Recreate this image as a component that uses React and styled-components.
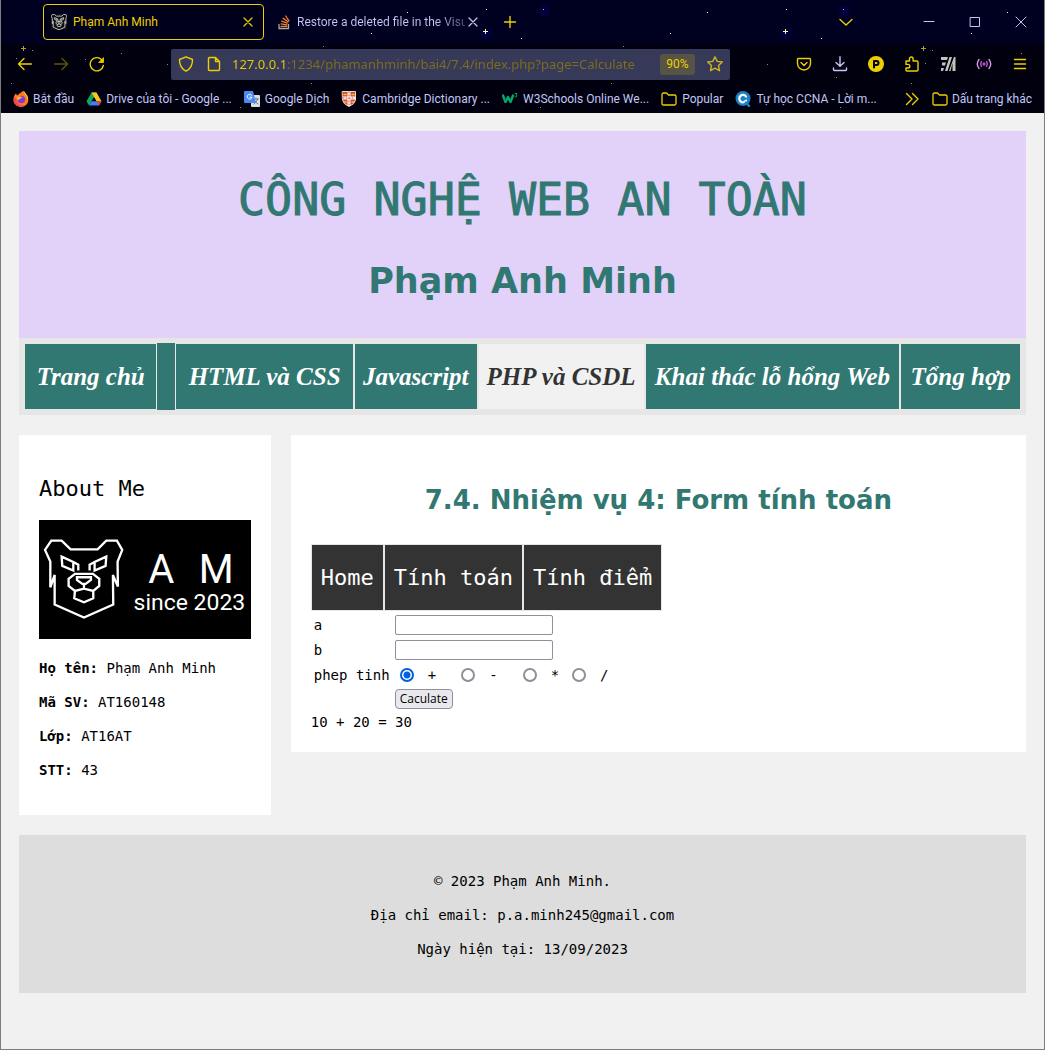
import React, { useState } from "react";
import styled, { createGlobalStyle } from "styled-components";

const MONO = '"DejaVu Sans Mono", "Liberation Mono", monospace';
const DISPLAY = '"DejaVu Sans", sans-serif';
const SCRIPT = '"Liberation Serif", serif';
const UI = 'Roboto, "Open Sans", sans-serif';
const TEAL = "#317873";
const GOLD = "#ecd000";
const LILAC = "#c3c7f4";

const GlobalStyle = createGlobalStyle`
  *, *::before, *::after { box-sizing: border-box; }
  body { margin: 0; background: #f1f1f1; }
  h1, h2, p { margin: 0; padding: 0; }
  button { font: inherit; color: inherit; }
  a { color: inherit; text-decoration: none; }
`;

/* ---------- browser window ---------- */

const Window = styled.div`
  min-height: 100vh;
  border: 1px solid #7d7d7d;
  border-top: 0;
  display: flex;
  flex-direction: column;
`;

const Chrome = styled.header`
  position: relative;
  background: #00000f;
  color: ${LILAC};
  font: 12px/16px ${UI};
`;

const Sky = styled.svg`
  position: absolute;
  inset: 0;
  width: 100%;
  height: 100%;
  pointer-events: none;
`;

const TabStrip = styled.div`
  display: flex;
  align-items: center;
  height: 44px;
  padding-left: 42px;
  background: #000021;
`;

const Tab = styled.div`
  display: flex;
  align-items: center;
  gap: ${(p) => (p.$active ? 6 : 4)}px;
  height: 36px;
  width: ${(p) => (p.$active ? 221 : 220)}px;
  padding: 0 7px;
  border: 1px solid ${(p) => (p.$active ? GOLD : "transparent")};
  border-radius: 4px;
  background: ${(p) => (p.$active ? "#00001a" : "transparent")};
  color: ${(p) => (p.$active ? GOLD : LILAC)};
`;

const TabTitle = styled.span`
  flex: 1;
  min-width: 0;
  white-space: nowrap;
  ${(p) => p.$fade && `
    color: transparent;
    background: linear-gradient(to left, #4a4c6c, ${LILAC} 30px);
    background-clip: text;
    -webkit-background-clip: text;
    padding-right: 4px;
    margin-right: -4px;
  `}
`;

const IconButton = styled.button`
  display: flex;
  align-items: center;
  justify-content: center;
  flex: none;
  width: ${(p) => p.$w || 36}px;
  height: 32px;
  padding: 0;
  border: 0;
  background: none;
  color: ${(p) => p.$color || GOLD};
  opacity: ${(p) => (p.$dim ? 0.4 : 1)};
`;

const Spacer = styled.div`
  flex: ${(p) => (p.$w ? "none" : 1)};
  width: ${(p) => (p.$w ? `${p.$w}px` : "auto")};
`;

const Toolbar = styled.div`
  display: flex;
  align-items: center;
  height: 40px;
  padding: 0 6px;
`;

const AddressBar = styled.div`
  flex: 1;
  min-width: 0;
  display: flex;
  align-items: center;
  height: 31px;
  margin: 0 56px;
  padding: 0 1px;
  border-radius: 2px;
  background: #363958;
`;

const AddressInput = styled.input`
  flex: 1;
  min-width: 0;
  padding: 0;
  margin-left: 4px;
  border: 0;
  outline: 0;
  font: 13px/20px "Noto Sans", sans-serif;
  color: transparent;
  caret-color: ${GOLD};
  background: linear-gradient(to right, ${GOLD} 56px, #7c6e1c 56px);
  background-clip: text;
  -webkit-background-clip: text;
`;

const ZoomBadge = styled.button`
  width: 35px;
  height: 21px;
  margin-right: 6px;
  padding: 0;
  border: 0;
  border-radius: 3px;
  background: #575443;
  color: ${GOLD};
`;

const BookmarkBar = styled.nav`
  display: flex;
  align-items: center;
  height: 29px;
  padding: 0 12px;
  gap: 12px;
`;

const Bookmark = styled.a`
  display: flex;
  align-items: center;
  gap: ${(p) => (p.$wide ? 5 : 4)}px;
  white-space: nowrap;
`;

/* ---------- page ---------- */

const Page = styled.main`
  flex: 1;
  padding: 18px;
  background: #f1f1f1;
  color: #000;
  font: 14px/20px ${MONO};
`;

const Banner = styled.header`
  padding: 42px 18px 35px;
  background: #e2d2f9;
  color: ${TEAL};
  text-align: center;
`;

const SiteTitle = styled.h1`
  font: 45px/54px ${MONO};
  -webkit-text-stroke: 1px ${TEAL};
`;

const SiteOwner = styled.p`
  margin-top: 32px;
  font: bold 35px/44px ${DISPLAY};
`;

const SiteNav = styled.nav`
  display: flex;
  padding: 5px;
  background: #e6e6e6;
`;

const NavLink = styled.a`
  flex: ${(p) => p.$share} 0 0;
  min-width: 0;
  display: flex;
  align-items: center;
  justify-content: center;
  height: 67px;
  border: 1px solid #e6e6e6;
  border-width: ${(p) => (p.$slim ? "0" : "1px")};
  background: ${(p) => (p.$current ? "#f1f1f1" : TEAL)};
  color: ${(p) => (p.$current ? "#333" : "#fff")};
  font: italic bold 25px/32px ${SCRIPT};
  white-space: nowrap;
`;

const Columns = styled.div`
  display: grid;
  grid-template-columns: 25% minmax(0, 1fr);
  align-items: start;
  gap: 20px;
  margin: 20px 0;
`;

const Card = styled.section`
  padding: 41px 20px ${(p) => p.$bottom}px;
  background: #fff;
`;

const AboutTitle = styled.h2`
  font: 22px/26px ${MONO};
`;

const Emblem = styled.svg`
  display: block;
  width: 100%;
  margin: 18px 0 19px;
  background: #000;
`;

const Lines = styled.div`
  display: grid;
  gap: 14px;
`;

const TaskTitle = styled.h2`
  padding: 8px 0 28px;
  color: ${TEAL};
  text-align: center;
  font: bold 26px/32px ${DISPLAY};
`;

const Menu = styled.nav`
  display: flex;
`;

const MenuLink = styled.a`
  padding: 0 9px;
  border: 1px solid #e6e6e6;
  background: #333;
  color: #fff;
  font: 22px/65px ${MONO};
`;

const FormTable = styled.table`
  border-spacing: 2px;
  td, th { padding: 1px; height: 23px; text-align: left; font-weight: normal; }
  th { width: 79px; }
  tr:last-child > * { height: 22px; }
`;

const NumberField = styled.input`
  display: block;
  width: 158px;
  height: 20px;
  padding: 0 4px;
  border: 1px solid #8f8f9d;
  border-radius: 2px;
  background: #fff;
`;

const Choices = styled.div`
  display: flex;
`;

const Choice = styled.label`
  display: flex;
  align-items: center;
  gap: 14px;
  padding-left: 5px;
  margin-right: ${(p) => (p.$tight ? 8 : 20)}px;
`;

const Radio = styled.input`
  appearance: none;
  width: 14px;
  height: 14px;
  margin: 0;
  border: 2px solid #8f8f9d;
  border-radius: 50%;
  background: #fff;
  &:checked {
    border-color: #0060df;
    background: radial-gradient(circle, #0060df 3px, #fff 4px);
  }
`;

const Submit = styled.button`
  display: block;
  height: 20px;
  padding: 0 4px;
  border: 1px solid #8f8f9d;
  border-radius: 4px;
  background: #e9e9ed;
  color: #000;
  font: 12px/16px "Open Sans", sans-serif;
`;

const Footer = styled.footer`
  display: grid;
  gap: 14px;
  padding: 36px 20px 34px;
  background: #ddd;
  text-align: center;
`;

/* ---------- drawings ---------- */

const Drawing = styled.svg`
  flex: none;
  background: ${(p) => p.$bg || "none"};
`;

const Glyph = ({ children, size = 16, w = 1.4 }) => (
  <Drawing width={size} height={size} viewBox="0 0 16 16" fill="none" stroke="currentColor" strokeWidth={w} strokeLinecap="round" strokeLinejoin="round" aria-hidden="true">
    {children}
  </Drawing>
);

const BearLines = () => (
  <>
    <path d="M18 90 37 62H68L95 88H176L202 62H234L250 90 236 125 237 200 222 165 223 254 135 293 47 254V165L34 202V125Z" />
    <path d="M68 110 103 126V152L70 138ZM103 126 118 134V152M202 110 167 126V152L200 138ZM167 126 152 134V152" />
    <path d="M108 162H162L181 177V198L163 213 135 206 108 213 89 198V177ZM114 172H156V180L140 192H130L114 180ZM135 192V206M108 213 106 235 135 247 163 235V213" />
  </>
);

const BearIcon = () => (
  <Drawing $bg="#111" width="16" height="16" viewBox="14 56 240 240" fill="none" stroke="#c8c8c8" strokeWidth="14" aria-hidden="true">
    <BearLines />
  </Drawing>
);

const CloseGlyph = () => (
  <Glyph w={1.2}><path d="M4 4 12 12M12 4 4 12" /></Glyph>
);
const FolderGlyph = () => (
  <Glyph w={1.3}><path d="M1 3.5Q1 2 2.5 2H5.5L7.5 4H13.5Q15 4 15 5.5V12.5Q15 14 13.5 14H2.5Q1 14 1 12.5Z" stroke={GOLD} /></Glyph>
);

const StackGlyph = () => (
  <Glyph w={1.3}>
    <path d="M2 10.5V14.5H11.5V10.5" stroke="#a9abb0" />
    <path d="M4 12.3H9.8M4.1 9.8 9.9 10.8M4.7 7.2 10.2 9.2M6.2 4.4 11 7.8M8.7 2 12 6.8" stroke="#f48024" />
  </Glyph>
);

const FirefoxGlyph = () => (
  <Glyph w={0}>
    <path d="M8 1.5C9 0 11 0 11 0 11 2 14 4 15 7 16.5 12 12.5 16 8 16 3.5 16 0 12.5.5 8 .7 5 2 3.5 3 2.5L4 4.5Z" fill="#ff7a1a" />
    <path d="M11 0C10 3 15.5 5 14 10 17 4.5 12 3 11 0Z" fill="#ffd43a" />
    <path d="M.7 9C2 15 8 17.5 12.5 14.5 8 15 4 13 3.5 9L2 6Z" fill="#ff3d5a" />
    <circle cx="8.3" cy="8.5" r="3.8" fill="#7a3ae0" />
    <path d="M4.5 5.5 8 5.5 9.5 7Q6 7 6 9.5L4 8Z" fill="#ffb52e" />
  </Glyph>
);

const DriveGlyph = () => (
  <Glyph w={0}>
    <path d="M5.5 1.5H10.5L8 6 3 14.5.5 10.3Z" fill="#12a85a" />
    <path d="M5.5 1.5H10.5L15.5 10.3H10.5Z" fill="#fcc41f" />
    <path d="M5.6 10.3H15.5L13 14.5H3Z" fill="#3e82f1" />
    <path d="M10.5 10.3H15.5L13 14.5Z" fill="#e5432d" />
  </Glyph>
);

const TranslateGlyph = () => (
  <Glyph w={1}>
    <rect x="7" y="4" width="9" height="12" rx="1" fill="#dcdfe4" stroke="none" />
    <path d="M9.5 8H14.5M12 7V8M13.5 8Q13 11 10 13M10.5 10 14 13" stroke="#6b7f92" />
    <path d="M1 0H9L12 12H1Q0 12 0 11V1Q0 0 1 0Z" fill="#4a8af4" stroke="none" />
    <path d="M7.6 4.3A2.4 2.4 0 1 0 8 6.2H5.8" stroke="#fff" />
  </Glyph>
);

const CrestGlyph = () => (
  <Glyph w={1}>
    <path d="M1.5.5H14.5V9Q14 13 8 15.5 2 13 1.5 9Z" fill="#d8452f" stroke="#e9d9cf" />
    <path d="M8 1V15M2 7H14" stroke="#fff" strokeWidth="3" strokeLinecap="butt" />
    <path d="M8 1V14M2 7H14" stroke="#d8452f" strokeDasharray="1 2" />
    <path d="M3 3.5H5M11 3.5H13M3.5 11H5M11 11H12.5" stroke="#f4c542" strokeWidth="1.5" />
  </Glyph>
);

const SchoolsGlyph = () => (
  <Glyph w={2.4}>
    <path d="M1 4.5 3.5 11 6 6 8.5 11 11 4.5" stroke="#04aa6d" />
    <path d="M13 2.5H15L14 4Q15.5 4.5 14.8 5.6 14 6.3 13 5.6" stroke="#04aa6d" strokeWidth="0.9" />
  </Glyph>
);

const CcnaGlyph = () => (
  <Glyph w={0}>
    <circle cx="8" cy="7.5" r="7.5" fill="#1b82c8" />
    <path d="M11 5.5A3.7 3.7 0 1 0 11 9.7" fill="none" stroke="#fff" strokeWidth="2.2" />
    <path d="M11 11.5 14 15" stroke="#1b82c8" strokeWidth="2.5" />
  </Glyph>
);

const STARS = [
  [407, 12], [486, 9], [543, 9], [371, 33], [521, 38], [670, 33], [707, 12], [786, 9], [843, 9], [821, 38], [971, 33], [1007, 12],
];
const FAINT_STARS = [
  [32, 50], [16, 58], [121, 53], [85, 59], [167, 64], [11, 83], [240, 107], [311, 83], [323, 46], [623, 46], [611, 83],
  [540, 107], [767, 64], [836, 77], [840, 107], [932, 50], [925, 63], [911, 83], [1021, 53],
];

const StarField = () => (
  <Sky aria-hidden="true">
    {STARS.map(([x, y]) => <rect key={`${x}-${y}`} x={x - 1} y={y} width="1" height="1" fill="#ffff9c" />)}
    {FAINT_STARS.map(([x, y]) => <rect key={`${x}-${y}`} x={x - 1} y={y} width="1" height="1" fill="#8f8f5c" />)}
    {[[543, 11], [843, 11], [485, 33], [785, 33]].map(([x, y]) => (
      <circle key={x} cx={x} cy={y} r="6" fill="#0000a0" fillOpacity="0.2" />
    ))}
    {[[484, 31], [784, 31]].map(([x, y]) => (
      <path key={x} d={`M${x - 2} ${y}.5h5M${x}.5 ${y - 2}v5`} stroke="#ffff9c" />
    ))}
    {[[22, 48], [922, 48]].map(([x, y]) => (
      <path key={x} d={`M${x - 2} ${y}.5h5M${x}.5 ${y - 2}v5`} stroke="#a59c50" />
    ))}
  </Sky>
);

/* ---------- data ---------- */

const BOOKMARKS = [
  ["Bắt đầu", FirefoxGlyph],
  ["Drive của tôi - Google ...", DriveGlyph],
  ["Google Dịch", TranslateGlyph],
  ["Cambridge Dictionary ...", CrestGlyph],
  ["W3Schools Online We...", SchoolsGlyph],
  ["Popular", FolderGlyph],
  ["Tự học CCNA - Lời m...", CcnaGlyph],
];

const NAV = [
  { text: "Trang chủ", share: 133 },
  { text: "", share: 18, slim: true },
  { text: "HTML và CSS", share: 179 },
  { text: "Javascript", share: 123 },
  { text: "PHP và CSDL", share: 167, current: true },
  { text: "Khai thác lỗ hổng Web", share: 257 },
  { text: "Tổng hợp", share: 120 },
];

const PROFILE = [
  ["Họ tên:", "Phạm Anh Minh"],
  ["Mã SV:", "AT160148"],
  ["Lớp:", "AT16AT"],
  ["STT:", "43"],
];

const BrowserChrome = () => (
  <Chrome>
    <TabStrip>
      <Tab $active>
        <BearIcon />
        <TabTitle>Phạm Anh Minh</TabTitle>
        <CloseGlyph />
      </Tab>
      <Spacer $w={5} />
      <Tab>
        <StackGlyph />
        <TabTitle $fade>Restore a deleted file in the Visu</TabTitle>
        <CloseGlyph />
      </Tab>
      <IconButton $w={42} aria-label="New tab"><Glyph><path d="M8 2.5V13.5M2.5 8H13.5" /></Glyph></IconButton>
      <Spacer />
      <IconButton $w={32} aria-label="List all tabs"><Glyph><path d="M2 5.5 8 11 14 5.5" /></Glyph></IconButton>
      <Spacer $w={44} />
      <IconButton $w={46} $color={LILAC} aria-label="Minimize"><Glyph w={1}><path d="M3 7.5H13" /></Glyph></IconButton>
      <IconButton $w={46} $color={LILAC} aria-label="Maximize"><Glyph w={1}><path d="M3.5 3.5H12.5V12.5H3.5Z" /></Glyph></IconButton>
      <IconButton $w={46} $color={LILAC} aria-label="Close"><Glyph w={1}><path d="M3 3 13 13M13 3 3 13" /></Glyph></IconButton>
    </TabStrip>
    <Toolbar>
      <IconButton aria-label="Back"><Glyph><path d="M14.5 8H1.5M7 2.5 1.5 8 7 13.5" /></Glyph></IconButton>
      <IconButton $dim aria-label="Forward"><Glyph><path d="M1.5 8H14.5M9 2.5 14.5 8 9 13.5" /></Glyph></IconButton>
      <IconButton aria-label="Reload"><Glyph><path d="M14.3 9.5A6.6 6.6 0 1 1 12.7 3.8" /><path d="M14.5 2V6.5H10Z" fill="currentColor" strokeWidth="0.8" /></Glyph></IconButton>
      <AddressBar>
        <IconButton $w={28} aria-label="Tracking protection"><Glyph><path d="M8 .8 14.5 3.5Q14.8 11.5 8 15.2 1.2 11.5 1.5 3.5Z" /></Glyph></IconButton>
        <IconButton $w={28} aria-label="Site information"><Glyph><path d="M3.5 1.5H9.5L13.5 5.5V13.5Q13.5 14.5 12.5 14.5H3.5Q2.5 14.5 2.5 13.5V2.5Q2.5 1.5 3.5 1.5ZM9.5 1.5V5.5H13.5" /></Glyph></IconButton>
        <AddressInput aria-label="Address" defaultValue="127.0.0.1:1234/phamanhminh/bai4/7.4/index.php?page=Calculate" />
        <ZoomBadge>90%</ZoomBadge>
        <IconButton $w={28} $color="#c9b51a" aria-label="Bookmark this page"><Glyph><path d="M8 .8 10.2 5.4 15.3 6 11.5 9.5 12.5 14.7 8 12.2 3.5 14.7 4.5 9.5.7 6 5.8 5.4Z" /></Glyph></IconButton>
      </AddressBar>
      <IconButton aria-label="Pocket"><Glyph><path d="M2.5 2.5H13.5Q14.5 2.5 14.5 3.5V7.5A6.5 6.5 0 0 1 1.5 7.5V3.5Q1.5 2.5 2.5 2.5ZM5 6.5 8 9.5 11 6.5" /></Glyph></IconButton>
      <IconButton $color={LILAC} aria-label="Downloads"><Glyph><path d="M8 .8V10M4 6.5 8 10.3 12 6.5M1.5 12V13.5Q1.5 14.5 2.5 14.5H13.5Q14.5 14.5 14.5 13.5V12" /></Glyph></IconButton>
      <IconButton aria-label="Profile">
        <Glyph><circle cx="8" cy="8" r="7.3" fill="currentColor" /><path d="M6 11.5V5H8.5Q10.5 5 10.5 7T8.5 9H6" stroke="#00000f" strokeWidth="2" /></Glyph>
      </IconButton>
      <IconButton aria-label="Extensions"><Glyph><path d="M2 5H5.5V2.8A1.8 1.8 0 0 1 9.1 2.8V5H13Q14 5 14 6V14Q14 15 13 15H3Q2 15 2 14V12H4A1.8 1.8 0 0 0 4 8.4H2Z" /></Glyph></IconButton>
      <IconButton $color="#c4c4bd" aria-label="Reader extension">
        <Glyph w={0}><path d="M1 1H8L7 4H1ZM2 6.5H6L5 9.5H2ZM1 12H4L3 15H1ZM9.5 1H12L7.5 15H5ZM14 1H15.5V15H12.5V7L10.5 15H9Z" fill="currentColor" /></Glyph>
      </IconButton>
      <IconButton $color="#b548c4" aria-label="Broadcast extension">
        <Glyph><circle cx="8" cy="8" r="1" fill="currentColor" /><path d="M5.5 5.5Q3.8 8 5.5 10.5M10.5 5.5Q12.2 8 10.5 10.5" /><path d="M3 3.5Q-.5 8 3 12.5M13 3.5Q16.5 8 13 12.5" stroke="#cf9ad8" /></Glyph>
      </IconButton>
      <IconButton aria-label="Menu"><Glyph><path d="M2.5 3.5H13.5M2.5 8H13.5M2.5 12.5H13.5" /></Glyph></IconButton>
    </Toolbar>
    <BookmarkBar aria-label="Bookmarks">
      {BOOKMARKS.map(([text, Art], i) => (
        <Bookmark key={text} $wide={i > 1} href="#"><Art />{text}</Bookmark>
      ))}
      <Spacer />
      <IconButton $w={16} aria-label="More bookmarks"><Glyph><path d="M2.5 2.5 8 8 2.5 13.5M8.5 2.5 14 8 8.5 13.5" /></Glyph></IconButton>
      <Bookmark href="#"><FolderGlyph />Dấu trang khác</Bookmark>
    </BookmarkBar>
    <StarField />
  </Chrome>
);

export default function App() {
  const [op, setOp] = useState("+");
  return (
    <Window>
      <GlobalStyle />
      <BrowserChrome />
      <Page>
        <Banner>
          <SiteTitle>CÔNG NGHỆ WEB AN TOÀN</SiteTitle>
          <SiteOwner>Phạm Anh Minh</SiteOwner>
        </Banner>
        <SiteNav>
          {NAV.map((n) => (
            <NavLink key={n.text} href="#" $share={n.share} $slim={n.slim} $current={n.current} aria-label={n.text || "Menu"}>
              {n.text}
            </NavLink>
          ))}
        </SiteNav>
        <Columns>
          <Card $bottom={35}>
            <AboutTitle>About Me</AboutTitle>
            <Emblem viewBox="0 0 636 357" role="img" aria-label="A M since 2023">
              <g fill="none" stroke="#fff" strokeWidth="7"><BearLines /></g>
              <g fill="#fff" fontFamily="Roboto, sans-serif">
                <text x="328" y="190" fontSize="120">A</text>
                <text x="480" y="190" fontSize="120">M</text>
                <text x="284" y="270" fontSize="69">since 2023</text>
              </g>
            </Emblem>
            <Lines>
              {PROFILE.map(([k, v]) => <p key={k}><b>{k}</b> {v}</p>)}
            </Lines>
          </Card>
          <Card $bottom={20}>
            <TaskTitle>7.4. Nhiệm vụ 4: Form tính toán</TaskTitle>
            <Menu>
              <MenuLink href="#">Home</MenuLink>
              <MenuLink href="#">Tính toán</MenuLink>
              <MenuLink href="#">Tính điểm</MenuLink>
            </Menu>
            <form onSubmit={(e) => e.preventDefault()}>
              <FormTable>
                <tbody>
                  <tr><th><label htmlFor="a">a</label></th><td><NumberField id="a" type="text" /></td></tr>
                  <tr><th><label htmlFor="b">b</label></th><td><NumberField id="b" type="text" /></td></tr>
                  <tr>
                    <th>phep tinh</th>
                    <td>
                      <Choices>
                        {["+", "-", "*", "/"].map((s) => (
                          <Choice key={s} $tight={s === "*"}>
                            <Radio type="radio" name="op" value={s} checked={op === s} onChange={() => setOp(s)} />
                            {s}
                          </Choice>
                        ))}
                      </Choices>
                    </td>
                  </tr>
                  <tr><th /><td><Submit type="submit">Caculate</Submit></td></tr>
                </tbody>
              </FormTable>
            </form>
            <p>10 + 20 = 30</p>
          </Card>
        </Columns>
        <Footer>
          <p>© 2023 Phạm Anh Minh.</p>
          <p>Địa chỉ email: p.a.minh245@gmail.com</p>
          <p>Ngày hiện tại: 13/09/2023</p>
        </Footer>
      </Page>
    </Window>
  );
}
